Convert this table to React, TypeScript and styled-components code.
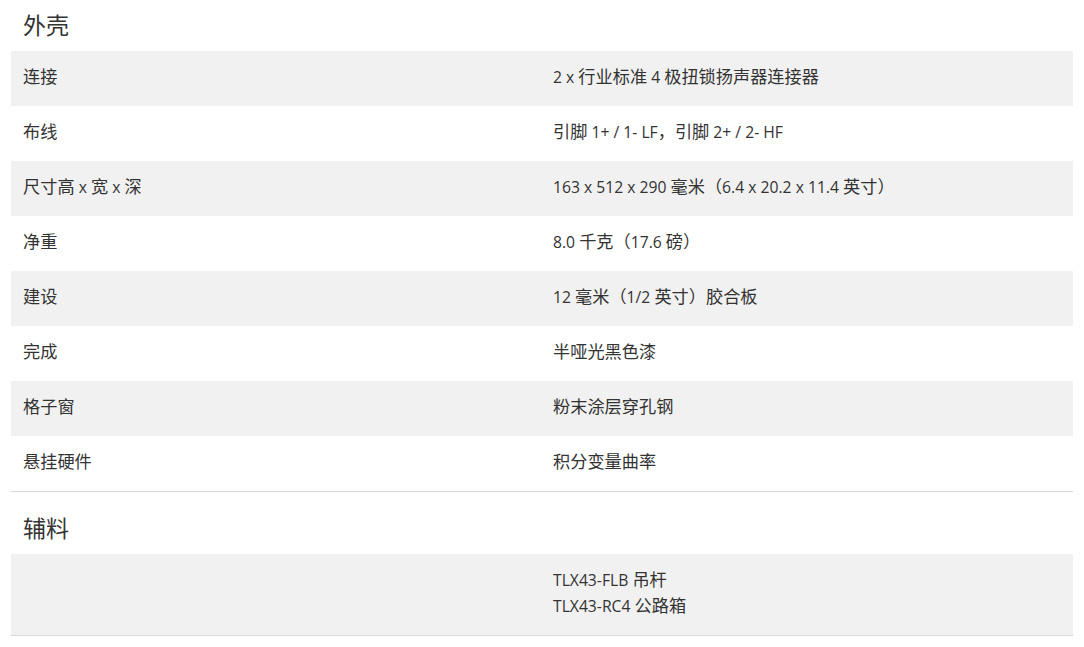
import React from 'react';
import styled, { createGlobalStyle } from 'styled-components';

const GlobalStyle = createGlobalStyle`
  body {
    margin: 0;
    background: #fff;
    font-family: "Open Sans", "Noto Sans CJK SC", sans-serif;
    color: #333;
  }
`;

const Page = styled.div`
  padding: 0 11px;
`;

const Section = styled.section<{ $first?: boolean }>`
  margin-top: ${(p) => (p.$first ? '0' : '11px')};
`;

const Heading = styled.h2`
  margin: 0;
  padding: 0 12px;
  height: 51px;
  line-height: 50px;
  font-size: 23px;
  font-weight: 400;
  color: #333;
`;

const Table = styled.div`
  border-bottom: 1px solid #d9d9d9;
`;

const Row = styled.div<{ $shade: boolean }>`
  display: grid;
  grid-template-columns: 1fr 1fr;
  background: ${(p) => (p.$shade ? '#f1f1f1' : '#fff')};
`;

const Cell = styled.div`
  padding: 13px 12px 16px;
  font-size: 15.7px;
  line-height: 26px;

  & + & {
    padding-left: 11px;
  }
`;

const Line = styled.div`
  height: 26px;
  white-space: nowrap;
`;

// CJK glyphs sit a touch larger than the latin ones in the original
const Cjk = styled.span`
  font-size: 17.2px;
  line-height: 17px;
`;

const CJK_RUN = /([\u3000-\u303f\u4e00-\u9fff\uff00-\uffef]+)/;

const Mixed = ({ text }: { text: string }) => (
  <>
    {text.split(CJK_RUN).map((part, i) =>
      i % 2 === 1 ? <Cjk key={i}>{part}</Cjk> : part
    )}
  </>
);

type Spec = { label: string; value: string[] };

const housing: Spec[] = [
  { label: '连接', value: ['2 x 行业标准 4 极扭锁扬声器连接器'] },
  { label: '布线', value: ['引脚 1+ / 1- LF，引脚 2+ / 2- HF'] },
  { label: '尺寸高 x 宽 x 深', value: ['163 x 512 x 290 毫米（6.4 x 20.2 x 11.4 英寸）'] },
  { label: '净重', value: ['8.0 千克（17.6 磅）'] },
  { label: '建设', value: ['12 毫米（1/2 英寸）胶合板'] },
  { label: '完成', value: ['半哑光黑色漆'] },
  { label: '格子窗', value: ['粉末涂层穿孔钢'] },
  { label: '悬挂硬件', value: ['积分变量曲率'] },
];

const accessories: Spec[] = [
  { label: '', value: ['TLX43-FLB 吊杆', 'TLX43-RC4 公路箱'] },
];

const SpecTable = ({ rows }: { rows: Spec[] }) => (
  <Table>
    {rows.map((r, i) => (
      <Row key={i} $shade={i % 2 === 0}>
        <Cell>
          <Line>
            <Mixed text={r.label} />
          </Line>
        </Cell>
        <Cell>
          {r.value.map((v) => (
            <Line key={v}>
              <Mixed text={v} />
            </Line>
          ))}
        </Cell>
      </Row>
    ))}
  </Table>
);

export default function App() {
  return (
    <>
      <GlobalStyle />
      <Page>
        <Section $first>
          <Heading>外壳</Heading>
          <SpecTable rows={housing} />
        </Section>
        <Section>
          <Heading>辅料</Heading>
          <SpecTable rows={accessories} />
        </Section>
      </Page>
    </>
  );
}
